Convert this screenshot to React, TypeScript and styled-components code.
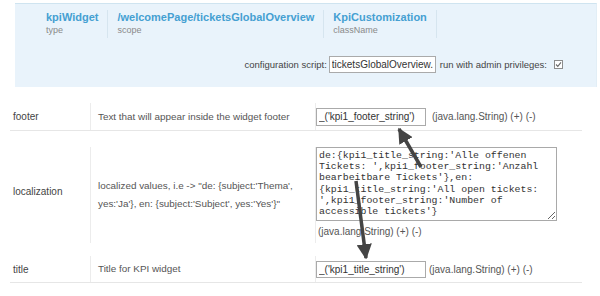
import React from "react";
import styled, { createGlobalStyle } from "styled-components";

const GlobalStyle = createGlobalStyle`
  html, body {
    margin: 0;
    padding: 0;
    background: #fff;
  }
  body {
    font-family: "Liberation Sans", Arial, sans-serif;
    color: #444;
  }
`;

const Page = styled.div`
  position: relative;
  width: 600px;
  height: 296px;
  overflow: hidden;
`;

const HeaderPanel = styled.div`
  margin: 3px 3px 0 15px;
  height: 84px;
  background: #e9f3fb;
  border-top: 1px solid #cfe4f0;
  border-right: 1px solid #e2eef6;
  box-sizing: border-box;
  display: flex;
  flex-direction: column;
`;

const InfoRow = styled.div`
  display: flex;
  padding: 6px 0 0 31px;
`;

const InfoItem = styled.div<{ $first?: boolean }>`
  display: flex;
  flex-direction: column;
  height: 28px;
  padding: 0 9px 0 ${({ $first }) => ($first ? "0" : "9px")};
  border-right: 1px solid #d6e5ef;
`;

const InfoValue = styled.div`
  font-size: 11px;
  font-weight: bold;
  line-height: 14px;
  color: #45a0d2;
`;

const InfoKey = styled.div`
  font-size: 9px;
  line-height: 13px;
  color: #8a8a8a;
`;

const ConfigRow = styled.div`
  display: flex;
  justify-content: flex-end;
  align-items: center;
  margin-top: 18px;
  padding-right: 33px;
  font-size: 9.5px;
  color: #444;
  white-space: nowrap;
`;

const TextBox = styled.input<{ $width: number; $height: number }>`
  width: ${({ $width }) => $width}px;
  height: ${({ $height }) => $height}px;
  box-sizing: border-box;
  margin: 0;
  border: 1px solid #aaa;
  border-radius: 0;
  background: #fff;
  padding: 0 2px;
  font-family: "Liberation Sans", Arial, sans-serif;
  font-size: 10px;
  color: #333;
  outline: none;
  flex-shrink: 0;
`;

const ConfigInput = styled(TextBox)`
  margin: 0 4px 0 2px;
`;

const CheckBox = styled.svg`
  margin-left: 7px;
  width: 9px;
  height: 9px;
  flex-shrink: 0;
`;

const Table = styled.div`
  margin: 16px 18px 0 10px;
  display: flex;
  flex-direction: column;
`;

const Row = styled.div<{ $top: number; $divider?: boolean }>`
  display: grid;
  grid-template-columns: 80px 225px 1fr;
  margin-top: ${({ $top }) => $top}px;
  border-bottom: 1px solid ${({ $divider }) => ($divider ? "#e6e6e6" : "transparent")};
`;

const NameCell = styled.div<{ $lift?: number }>`
  display: flex;
  align-items: center;
  padding: 0 0 ${({ $lift }) => $lift ?? 0}px 3px;
  font-size: 10px;
  color: #444;
`;

const DescCell = styled.div`
  display: flex;
  align-items: center;
  border-left: 1px solid #ececec;
  padding-left: 7px;
  font-size: 9.9px;
  line-height: 18px;
  color: #555;
`;

const ValueCell = styled.div<{ $stack?: boolean; $height: number }>`
  display: flex;
  flex-direction: ${({ $stack }) => ($stack ? "column" : "row")};
  align-items: ${({ $stack }) => ($stack ? "flex-start" : "center")};
  border-left: 1px solid #ececec;
  min-height: ${({ $height }) => $height}px;
`;

const TypeNote = styled.span<{ $gap: number }>`
  margin-left: ${({ $gap }) => $gap}px;
  font-size: 10px;
  color: #555;
  white-space: nowrap;
`;

const TypeLine = styled.div`
  margin: 4px 0 4px 2px;
  font-size: 10px;
  line-height: 14px;
  color: #555;
`;

const Localization = styled.textarea`
  display: block;
  width: 241px;
  height: 74px;
  box-sizing: border-box;
  margin: 0;
  border: 1px solid #a9a9a9;
  padding: 2px 2px;
  font-family: "Liberation Mono", "Courier New", monospace;
  font-size: 9.9px;
  line-height: 11.2px;
  color: #333;
  white-space: pre;
  overflow: hidden;
  resize: both;
  outline: none;
`;

const ArrowLayer = styled.svg`
  position: absolute;
  left: 0;
  top: 0;
  width: 600px;
  height: 296px;
  pointer-events: none;
`;

const localizationValue = [
  "de:{kpi1_title_string:'Alle offenen",
  "Tickets: ',kpi1_footer_string:'Anzahl",
  "bearbeitbare Tickets'},en:",
  "{kpi1_title_string:'All open tickets:",
  "',kpi1_footer_string:'Number of",
  "accessible tickets'}",
].join("\n");

const App = () => {
  return (
    <Page>
      <GlobalStyle />
      <HeaderPanel>
        <InfoRow>
          <InfoItem $first>
            <InfoValue>kpiWidget</InfoValue>
            <InfoKey>type</InfoKey>
          </InfoItem>
          <InfoItem>
            <InfoValue>/welcomePage/ticketsGlobalOverview</InfoValue>
            <InfoKey>scope</InfoKey>
          </InfoItem>
          <InfoItem>
            <InfoValue>KpiCustomization</InfoValue>
            <InfoKey>className</InfoKey>
          </InfoItem>
        </InfoRow>
        <ConfigRow>
          configuration script:
          <ConfigInput $width={107} $height={17} readOnly value="ticketsGlobalOverview.groovy" />
          run with admin privileges:
          <CheckBox viewBox="0 0 9 9">
            <rect x="0.5" y="0.5" width="8" height="8" fill="#fff" stroke="#8c8c8c" />
            <path d="M2 4.5 L3.8 6.4 L7 2.4" fill="none" stroke="#6a6a6a" strokeWidth="1.1" />
          </CheckBox>
        </ConfigRow>
      </HeaderPanel>

      <Table>
        <Row $top={0} $divider>
          <NameCell>footer</NameCell>
          <DescCell>Text that will appear inside the widget footer</DescCell>
          <ValueCell $height={27}>
            <TextBox $width={110} $height={18} readOnly value="_('kpi1_footer_string')" />
            <TypeNote $gap={6}>(java.lang.String) (+) (-)</TypeNote>
          </ValueCell>
        </Row>
        <Row $top={16}>
          <NameCell $lift={8}>localization</NameCell>
          <DescCell>
            localized values, i.e -&gt; "de: {"{"}subject:'Thema',
            <br />
            yes:'Ja'{"}"}, en: {"{"}subject:'Subject', yes:'Yes'{"}"}"
          </DescCell>
          <ValueCell $stack $height={96}>
            <Localization readOnly value={localizationValue} />
            <TypeLine>(java.lang.String) (+) (-)</TypeLine>
          </ValueCell>
        </Row>
        <Row $top={12} $divider>
          <NameCell>title</NameCell>
          <DescCell>Title for KPI widget</DescCell>
          <ValueCell $height={26}>
            <TextBox $width={110} $height={17} readOnly value="_('kpi1_title_string')" />
            <TypeNote $gap={3}>(java.lang.String) (+) (-)</TypeNote>
          </ValueCell>
        </Row>
      </Table>

      <ArrowLayer viewBox="0 0 600 296">
        <defs>
          <marker id="head" viewBox="0 0 10 10" refX="9" refY="5" markerWidth="4.4" markerHeight="4.4" orient="auto">
            <path d="M0 0 L10 5 L0 10 z" fill="#444" />
          </marker>
        </defs>
        <line x1="421" y1="167" x2="399" y2="129" stroke="#444" strokeWidth="3.5" markerEnd="url(#head)" />
        <line x1="356" y1="181" x2="366" y2="258" stroke="#444" strokeWidth="3.5" markerEnd="url(#head)" />
      </ArrowLayer>
    </Page>
  );
};

export default App;
